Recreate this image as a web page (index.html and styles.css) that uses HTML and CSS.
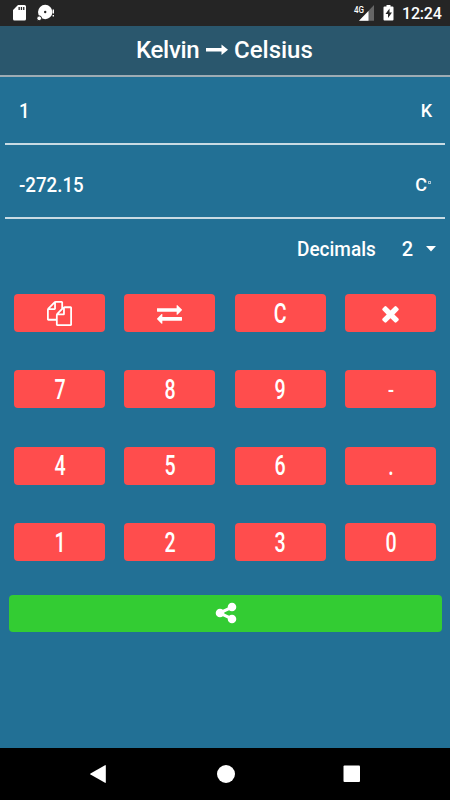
FILE: index.html
```html
<!DOCTYPE html>
<html lang="en">
<head>
    <meta charset="UTF-8">
    <title>Kelvin to Celsius</title>
    <link rel="stylesheet" href="styles.css">
</head>
<body>
<div class="status">
    <svg class="sd" width="15" height="18" viewBox="0 0 15 18"><path fill="#fff" fill-rule="evenodd" d="M5 1h6.500q1.500 0 1.500 1.500v12.500q0 1.500-1.500 1.500h-10q-1.500 0-1.500-1.500v-9zM5.500 3v3h1.300v-3zm2.300 0v3h1.300v-3zm2.300 0v3h1.300v-3z"/></svg>
    <svg class="disc" width="18" height="18" viewBox="0 0 18 18"><circle cx="8.200" cy="8" r="7.200" fill="#fff"/><circle cx="2.200" cy="14.300" r="2.400" fill="#fff" stroke="#252525"/><circle cx="8.200" cy="8" r="1.200" fill="#252525"/><path d="M16.300 5.500v4M16.300 11v1.600" stroke="#fff" stroke-width="1.400"/></svg>
    <svg class="signal" width="20" height="18" viewBox="0 0 20 18"><path fill="#666" d="M20 1v15.700h-15z"/><path fill="#fff" d="M14.500 7v9.700h-9.500z"/><text x="0" y="8.500" class="net" textLength="10" lengthAdjust="spacingAndGlyphs">4G</text></svg>
    <svg class="battery" width="11" height="18" viewBox="0 0 11 18"><path fill="#fff" d="M3.500 1h4v1.500h2q1 0 1 1v12q0 1-1 1h-8q-1 0-1-1v-12q0-1 1-1h2z"/><path fill="#252525" d="M6.500 4.500l-4 5.500h2.500v4l4-5.500h-2.500z"/></svg>
    <span class="time">12:24</span>
</div>
<div class="header">
    <span class="from">Kelvin</span>
    <svg width="22" height="12" viewBox="0 0 22 12"><path fill="#fff" d="M0 4.100h15.500v-3.600l6.500 5.300-6.500 5.300v-3.600h-15.500z"/></svg>
    <span class="to">Celsius</span>
</div>
<div class="main">
    <div class="field first"><span class="value">1</span><span class="unit">K</span></div>
    <div class="field"><span class="value">-272.15</span><span class="unit">C<i class="deg"></i></span></div>
    <div class="decimals">
        <span class="label">Decimals</span>
        <span class="num">2</span>
        <svg width="10" height="6" viewBox="0 0 10 6"><path fill="#fff" d="M0 0h10l-5 5.500z"/></svg>
    </div>
    <div class="keys">
        <div class="key"><svg width="25" height="25" viewBox="0 0 1792 1792"><path d="M1696 384q40 0 68 28t28 68v1216q0 40-28 68t-68 28h-960q-40 0-68-28t-28-68v-288h-544q-40 0-68-28t-28-68v-672q0-40 20-88t48-76l408-408q28-28 76-48t88-20h416q40 0 68 28t28 68v328q68-40 128-40h416zm-544 213l-299 299h299v-299zm-640-384l-299 299h299v-299zm196 647l316-316v-416h-384v416q0 40-28 68t-68 28h-416v640h512v-256q0-40 20-88t48-76zm956 804v-1152h-384v416q0 40-28 68t-68 28h-416v640h896z"/></svg></div>
        <div class="key"><svg width="25" height="25" viewBox="0 0 1792 1792"><path d="M1792 1184v192q0 13-9.500 22.500t-22.500 9.500h-1376v192q0 13-9.500 22.500t-22.500 9.500q-12 0-24-10l-319-320q-9-9-9-22 0-14 9-23l320-320q9-9 23-9 13 0 22.500 9.500t9.500 22.500v192h1376q13 0 22.500 9.500t9.500 22.500zm0-544q0 14-9 23l-320 320q-9 9-23 9-13 0-22.500-9.500t-9.500-22.500v-192h-1376q-13 0-22.500-9.500t-9.500-22.500v-192q0-13 9.500-22.500t22.500-9.500h1376v-192q0-14 9-23t23-9q12 0 24 10l319 319q9 9 9 23z"/></svg></div>
        <div class="key"><span>C</span></div>
        <div class="key"><svg width="25" height="25" viewBox="0 0 1792 1792"><path d="M1490 1322q0 40-28 68l-136 136q-28 28-68 28t-68-28l-294-294-294 294q-28 28-68 28t-68-28l-136-136q-28-28-28-68t28-68l294-294-294-294q-28-28-28-68t28-68l136-136q28-28 68-28t68 28l294 294 294-294q28-28 68-28t68 28l136 136q28 28 28 68t-28 68l-294 294 294 294q28 28 28 68z"/></svg></div>
        <div class="key"><span>7</span></div>
        <div class="key"><span>8</span></div>
        <div class="key"><span>9</span></div>
        <div class="key"><span class="minus">-</span></div>
        <div class="key"><span>4</span></div>
        <div class="key"><span>5</span></div>
        <div class="key"><span>6</span></div>
        <div class="key"><span>.</span></div>
        <div class="key"><span>1</span></div>
        <div class="key"><span>2</span></div>
        <div class="key"><span>3</span></div>
        <div class="key"><span>0</span></div>
    </div>
    <div class="share"><svg width="24" height="24" viewBox="0 0 1792 1792"><path d="M1344 1024q133 0 226.500 93.500t93.500 226.500-93.500 226.500-226.500 93.500-226.500-93.500-93.500-226.500q0-12 2-34l-360-180q-92 86-218 86-133 0-226.500-93.500t-93.500-226.500 93.500-226.500 226.500-93.500q126 0 218 86l360-180q-2-22-2-34 0-133 93.500-226.500t226.500-93.500 226.500 93.500 93.500 226.500-93.500 226.500-226.500 93.500q-126 0-218-86l-360 180q2 22 2 34t-2 34l360 180q92-86 218-86z"/></svg></div>
</div>
<div class="nav">
    <svg width="18" height="20" viewBox="0 0 18 20"><path fill="#fff" d="M15 1.200q.8-.4.800.5v16.600q0 .9-.8.500l-14.500-8.200q-.6-.6 0-1.200z"/></svg>
    <svg width="18" height="18" viewBox="0 0 18 18"><circle cx="9" cy="9" r="9" fill="#fff"/></svg>
    <svg width="18" height="18" viewBox="0 0 18 18"><rect x="0.500" y="0.500" width="16.500" height="16.500" rx="1" fill="#fff"/></svg>
</div>
</body>
</html>
```
FILE: styles.css
```css
*{
    margin: 0;
    padding: 0;
    box-sizing: border-box;
}
body{
    height: 800px;
    display: flex;
    flex-direction: column;
    overflow: hidden;
    background: #227095;
    color: #fff;
    font-family: Roboto, sans-serif;
}
svg{
    display: block;
    flex: none;
}
.status{
    height: 26px;
    flex: none;
    display: flex;
    align-items: center;
    padding: 0 9px 0 13px;
    background: #252525;
}
.disc{
    margin-left: 9px;
}
.signal{
    margin-left: auto;
    overflow: visible;
}
.net{
    font-size: 9.500px;
    font-weight: 500;
    fill: #fff;
}
.battery{
    margin: 0 8px 0 9px;
}
.time{
    font-size: 16px;
    font-weight: 500;
    line-height: 26px;
    width: 39px;
    white-space: nowrap;
    padding-top: 2px;
    letter-spacing: -0.200px;
}
.signal{
    margin-right: 0;
}
.header{
    height: 51px;
    flex: none;
    display: flex;
    align-items: center;
    justify-content: center;
    gap: 6px;
    padding-bottom: 2px;
    background: #2a576d;
    border-bottom: 2px solid #9eacb4;
    font-size: 24px;
    font-weight: 500;
    white-space: nowrap;
}
.from{
    width: 64px;
    letter-spacing: -0.300px;
}
.to{
    width: 80px;
}
.main{
    flex: 1;
}
.field{
    height: 74px;
    margin: 0 5px;
    padding: 7px 13px 0 14px;
    display: flex;
    align-items: center;
    justify-content: space-between;
    border-bottom: 2px solid #c9dbe4;
    font-size: 21px;
    font-weight: 500;
}
.first{
    height: 68px;
    padding-top: 1px;
}
.value{
    transform: scaleX(0.890);
    transform-origin: left;
}
.unit{
    display: flex;
    align-items: center;
    font-size: 18px;
}
.deg{
    width: 3px;
    height: 3px;
    margin: 0 1px 5px 1px;
    border: 1px solid #a9c6d5;
}
.decimals{
    height: 60px;
    display: flex;
    align-items: center;
    padding-right: 14px;
    justify-content: flex-end;
    font-size: 20px;
    font-weight: 500;
}
.label{
    width: 79px;
    transform: scaleX(0.950);
    transform-origin: left;
}
.num{
    margin: 0 13px 0 26px;
}
.keys{
    display: grid;
    grid-template-columns: repeat(4, 91px);
    grid-auto-rows: 38px;
    column-gap: 19.400px;
    row-gap: 38.400px;
    padding: 15px 0 0 14px;
}
.key{
    display: flex;
    align-items: center;
    justify-content: center;
    background: #ff4d4d;
    border-radius: 4px;
    font-size: 28px;
    line-height: 38px;
}
.key>span{
    transform: scaleX(0.700);
    padding-top: 1px;
    font-weight: 500;
}
.key>.minus{
    font-weight: 400;
    padding-top: 2px;
}
.key path, .share path{
    fill: #fff;
}
.share{
    height: 37px;
    margin: 33.800px 8px 0 9px;
    display: flex;
    align-items: center;
    justify-content: center;
    background: #33cc33;
    border-radius: 4px;
}
.nav{
    height: 52px;
    flex: none;
    display: flex;
    align-items: center;
    justify-content: space-between;
    padding: 0 89px 0 90px;
    background: #000;
}
```
